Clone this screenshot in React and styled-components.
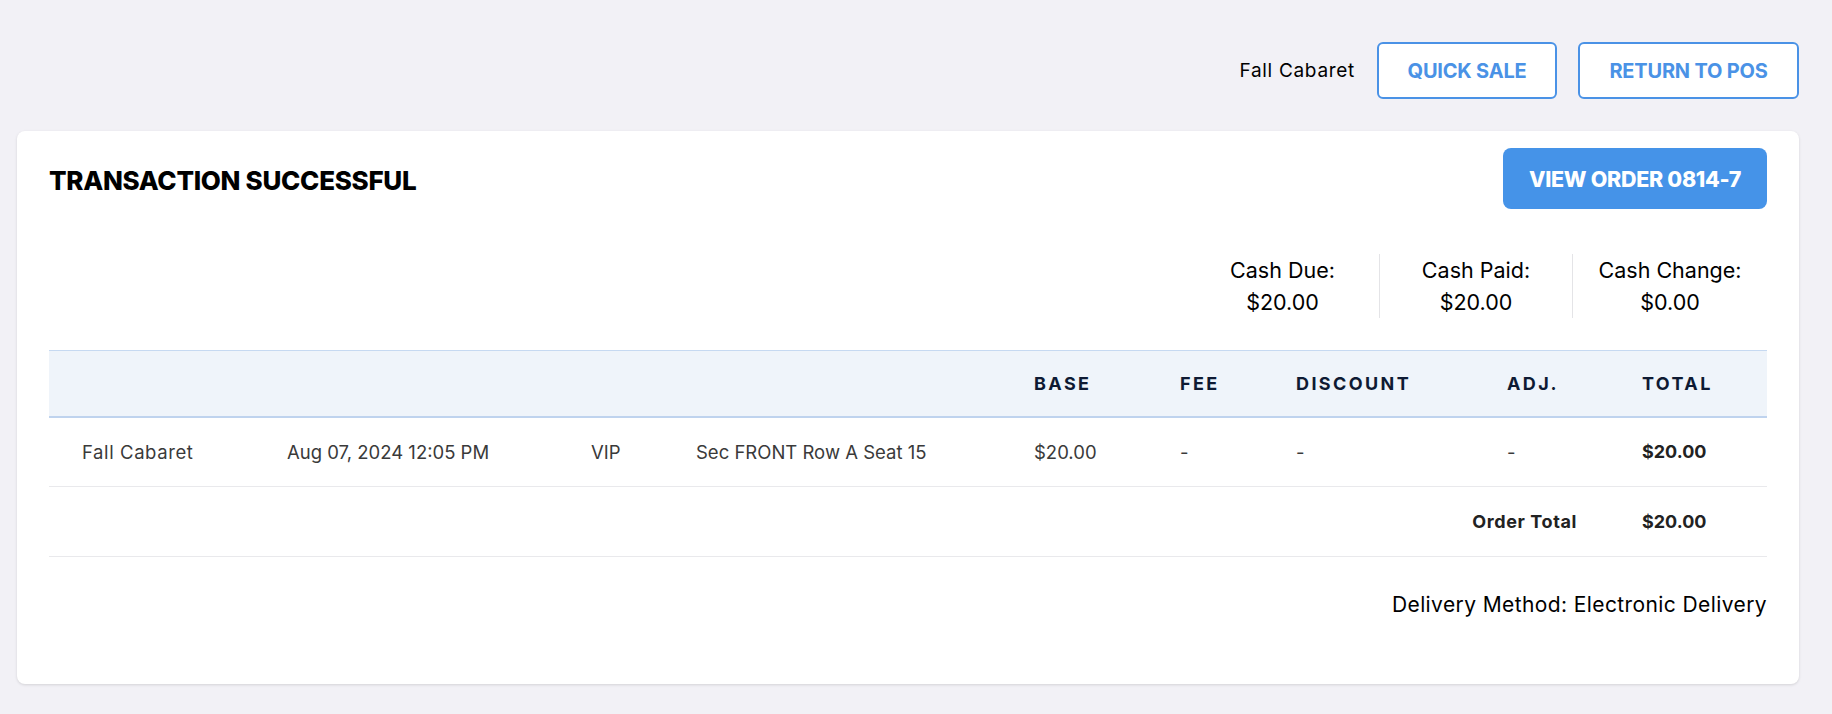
import React from "react";
import styled, { createGlobalStyle } from "styled-components";

const Global = createGlobalStyle`
  html, body { margin: 0; padding: 0; background: #f2f1f6; }
  body { font-family: "Inter", "Noto Sans", sans-serif; color: #000; }
  * { box-sizing: border-box; }
`;

const Page = styled.div`
  padding: 42px 33px 30px 17px;
  min-height: 714px;
`;

const TopBar = styled.div`
  display: flex;
  justify-content: flex-end;
  align-items: center;
  gap: 21px;
`;

const EventName = styled.span`
  font-size: 19px;
  letter-spacing: 0.7px;
  color: #000;
  margin-right: 1px;
`;

const OutlineButton = styled.button`
  height: 57px;
  width: ${(p) => p.$w}px;
  border: 2px solid #4a92e6;
  border-radius: 6px;
  background: #fff;
  color: #4a92e6;
  font-family: inherit;
  font-size: 20px;
  font-weight: 700;
  letter-spacing: -0.2px;
  cursor: pointer;
`;

const Card = styled.section`
  margin-top: 32px;
  background: #fff;
  border-radius: 8px;
  box-shadow: 0 1px 3px rgba(0, 0, 0, 0.13);
  padding: 17px 32px 65px;
`;

const CardHeader = styled.div`
  display: flex;
  justify-content: space-between;
  align-items: center;
  height: 61px;
`;

const Title = styled.h1`
  margin: 4px 0 0;
  font-size: 26px;
  font-weight: 800;
  color: #000;
  letter-spacing: -0.3px;
`;

const PrimaryButton = styled.button`
  height: 61px;
  width: 264px;
  border: none;
  border-radius: 8px;
  background: #4593e8;
  color: #fff;
  font-family: inherit;
  font-size: 21.5px;
  font-weight: 800;
  letter-spacing: -0.3px;
  cursor: pointer;
`;

const CashRow = styled.div`
  display: flex;
  justify-content: flex-end;
  margin-top: 45px;
`;

const CashCol = styled.div`
  width: ${(p) => p.$w}px;
  height: 64px;
  display: flex;
  flex-direction: column;
  justify-content: center;
  align-items: center;
  gap: 6px;
  border-left: ${(p) => (p.$divider ? "1px solid #e4e4e7" : "none")};
  font-size: 21.5px;
  color: #000;
  line-height: 26px;
`;

const Table = styled.table`
  margin-top: 32px;
  width: 100%;
  border-collapse: collapse;
  table-layout: fixed;
`;

const Col = styled.col`
  width: ${(p) => (p.$w ? `${p.$w}px` : "auto")};
`;

const HeadRow = styled.tr`
  background: #eff4fa;
  border-top: 1px solid #c6d9f1;
  border-bottom: 2px solid #bfd3ee;
  height: 66px;
`;

const HeadCell = styled.th`
  text-align: left;
  padding: 0 32px 0 33px;
  font-size: 18px;
  font-weight: 700;
  letter-spacing: 2.4px;
  color: #0e1a33;
`;

const BodyRow = styled.tr`
  border-bottom: 1px solid #e9e9ec;
  height: 70px;
`;

const Cell = styled.td`
  padding: 0 32px 0 33px;
  font-size: 18.5px;
  color: #3a3a3a;
  text-align: ${(p) => (p.$right ? "right" : "left")};
  font-weight: ${(p) => (p.$bold ? 700 : 400)};
  letter-spacing: ${(p) => p.$ls || 0}px;
  ${(p) => p.$bold && "color: #222; font-size: 18px;"}
  white-space: nowrap;
`;

const Delivery = styled.div`
  margin-top: 34px;
  text-align: right;
  font-size: 21px;
  letter-spacing: 0.4px;
  color: #000;
  line-height: 28px;
`;

const cols = [205, 304, 105, 338, 146, 116, 211, 135, null];

export default function App() {
  return (
    <>
      <Global />
      <Page>
        <TopBar>
          <EventName>Fall Cabaret</EventName>
          <OutlineButton $w={180}>QUICK SALE</OutlineButton>
          <OutlineButton $w={221}>RETURN TO POS</OutlineButton>
        </TopBar>
        <Card>
          <CardHeader>
            <Title>TRANSACTION SUCCESSFUL</Title>
            <PrimaryButton>VIEW ORDER 0814-7</PrimaryButton>
          </CardHeader>
          <CashRow>
            <CashCol $w={193}>
              <span>Cash Due:</span>
              <span>$20.00</span>
            </CashCol>
            <CashCol $w={193} $divider>
              <span>Cash Paid:</span>
              <span>$20.00</span>
            </CashCol>
            <CashCol $w={195} $divider>
              <span>Cash Change:</span>
              <span>$0.00</span>
            </CashCol>
          </CashRow>
          <Table>
            <colgroup>
              {cols.map((w, i) => (
                <Col key={i} $w={w} />
              ))}
            </colgroup>
            <thead>
              <HeadRow>
                <HeadCell />
                <HeadCell />
                <HeadCell />
                <HeadCell />
                <HeadCell>BASE</HeadCell>
                <HeadCell>FEE</HeadCell>
                <HeadCell>DISCOUNT</HeadCell>
                <HeadCell>ADJ.</HeadCell>
                <HeadCell>TOTAL</HeadCell>
              </HeadRow>
            </thead>
            <tbody>
              <BodyRow>
                <Cell $ls={0.6}>Fall Cabaret</Cell>
                <Cell>Aug 07, 2024 12:05 PM</Cell>
                <Cell>VIP</Cell>
                <Cell>Sec FRONT Row A Seat 15</Cell>
                <Cell>$20.00</Cell>
                <Cell>-</Cell>
                <Cell>-</Cell>
                <Cell>-</Cell>
                <Cell $bold>$20.00</Cell>
              </BodyRow>
              <BodyRow>
                <Cell colSpan={8} $right $bold $ls={0.6}>
                  Order Total
                </Cell>
                <Cell $bold>$20.00</Cell>
              </BodyRow>
            </tbody>
          </Table>
          <Delivery>Delivery Method: Electronic Delivery</Delivery>
        </Card>
      </Page>
    </>
  );
}
